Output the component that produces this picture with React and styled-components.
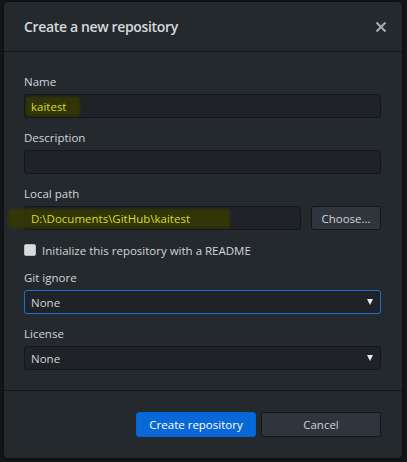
import React from "react";
import styled, { createGlobalStyle } from "styled-components";

const Global = createGlobalStyle`
  html, body { margin: 0; padding: 0; background: #141618; }
  body { font-family: "Open Sans", "Noto Sans", sans-serif; }
  * { box-sizing: border-box; }
`;

const Backdrop = styled.div`
  width: 407px;
  height: 462px;
  padding: 2px 5px 4px 4px;
  background: #141618;
`;

const Dialog = styled.div`
  height: 100%;
  background: #24292e;
  border-radius: 4px;
  display: flex;
  flex-direction: column;
  box-shadow: 0 0 4px rgba(0, 0, 0, 0.6);
`;

const Header = styled.div`
  height: 50px;
  flex: none;
  display: flex;
  align-items: center;
  justify-content: space-between;
  padding: 0 15px 0 20px;
  border-bottom: 1px solid #141618;
`;

const Title = styled.h1`
  margin: 0;
  font-size: 14px;
  font-weight: 600;
  letter-spacing: -0.35px;
  color: #d6d9dc;
`;

const Close = styled.button`
  border: 0;
  background: none;
  padding: 0;
  width: 12px;
  height: 12px;
  display: flex;
  color: #a7adb3;
`;

const Body = styled.div`
  flex: none;
  padding: 22px 21px 20px 20px;
  display: flex;
  flex-direction: column;
  gap: 12px;
  border-bottom: 1px solid #141618;
`;

const Field = styled.div`
  display: flex;
  flex-direction: column;
  gap: 4px;
`;

const Label = styled.label`
  font-size: 11.5px;
  line-height: 16px;
  color: #d1d5da;
`;

const Row = styled.div`
  display: flex;
  gap: 10px;
`;

const Box = styled.div`
  position: relative;
  flex: 1 0 auto;
  height: 24px;
  display: flex;
  align-items: center;
  justify-content: space-between;
  padding: 0 6px;
  background: #1f2226;
  border: 1px solid ${(p) => (p.$focus ? "#1a6fd4" : "#141618")};
  border-radius: 3px;
  font-size: 11.5px;
  color: ${(p) => (p.$marked ? "#d8db2c" : "#d1d5da")};
`;

const BoxText = styled.span`
  position: relative;
  z-index: 1;
`;

const Marker = styled.span`
  position: absolute;
  top: 2px;
  bottom: 1px;
  left: ${(p) => p.$left}px;
  width: ${(p) => p.$width}px;
  background: rgba(54, 56, 0, 0.85);
  filter: blur(1px);
  border-radius: 3px;
`;

const Arrow = styled.span`
  width: 0;
  height: 0;
  border-left: 3.5px solid transparent;
  border-right: 3.5px solid transparent;
  border-top: 6px solid #e8eaec;
  margin-right: 1px;
`;

const Button = styled.button`
  flex: none;
  height: ${(p) => (p.$tall ? 25 : 24)}px;
  width: ${(p) => p.$w}px;
  padding: 0;
  border-radius: 3px;
  font-family: inherit;
  font-size: 11.5px;
  border: 1px solid ${(p) => (p.$primary ? "#0366d6" : "#141618")};
  background: ${(p) => (p.$primary ? "#0968d8" : "#2f353d")};
  color: ${(p) => (p.$primary ? "#ffffff" : "#cfd3d7")};
`;

const CheckRow = styled.div`
  display: flex;
  align-items: center;
  gap: 6px;
  height: 16px;
  font-size: 11.5px;
  color: #d1d5da;
`;

const Check = styled.span`
  width: 12px;
  height: 12px;
  border-radius: 2px;
  background: #d9dadb;
  border: 1px solid #b9bcbf;
`;

const Footer = styled.div`
  flex: 1;
  display: flex;
  justify-content: flex-end;
  align-items: flex-start;
  gap: 5px;
  padding: 21px 21px 0 0;
`;

export default function App() {
  return (
    <>
      <Global />
      <Backdrop>
        <Dialog>
          <Header>
            <Title>Create a new repository</Title>
            <Close aria-label="close">
              <svg width="12" height="12" viewBox="0 0 12 12">
                <path d="M1.5 1.5 L10.5 10.5 M10.5 1.5 L1.5 10.5" stroke="currentColor" strokeWidth="2" />
              </svg>
            </Close>
          </Header>
          <Body>
            <Field>
              <Label>Name</Label>
              <Box $marked>
                <Marker $left={1} $width={54} />
                <BoxText>kaitest</BoxText>
              </Box>
            </Field>
            <Field>
              <Label>Description</Label>
              <Box />
            </Field>
            <Field>
              <Label>Local path</Label>
              <Row>
                <Box $marked>
                  <Marker $left={-17} $width={222} />
                  <BoxText>D:\Documents\GitHub\kaitest</BoxText>
                </Box>
                <Button $w={70}>Choose...</Button>
              </Row>
            </Field>
            <CheckRow>
              <Check />
              <span>Initialize this repository with a README</span>
            </CheckRow>
            <Field>
              <Label>Git ignore</Label>
              <Box $focus>
                <span>None</span>
                <Arrow />
              </Box>
            </Field>
            <Field>
              <Label>License</Label>
              <Box>
                <span>None</span>
                <Arrow />
              </Box>
            </Field>
          </Body>
          <Footer>
            <Button $primary $tall $w={120}>Create repository</Button>
            <Button $tall $w={120}>Cancel</Button>
          </Footer>
        </Dialog>
      </Backdrop>
    </>
  );
}
